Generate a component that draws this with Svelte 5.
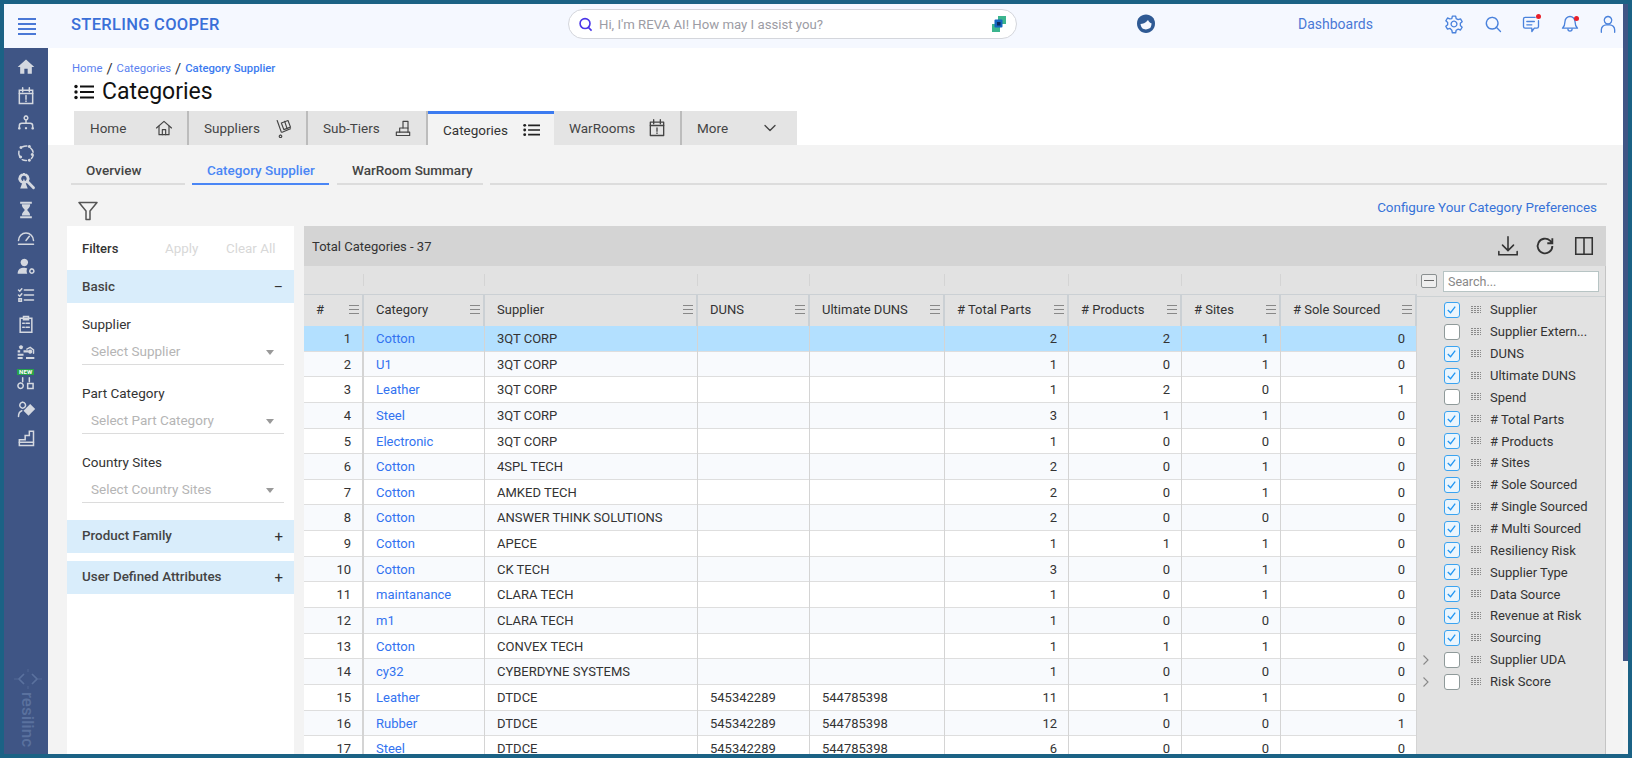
<script>
  const rows = [
    [1,'Cotton','3QT CORP','','',2,2,1,0],[2,'U1','3QT CORP','','',1,0,1,0],[3,'Leather','3QT CORP','','',1,2,0,1],
    [4,'Steel','3QT CORP','','',3,1,1,0],[5,'Electronic','3QT CORP','','',1,0,0,0],[6,'Cotton','4SPL TECH','','',2,0,1,0],
    [7,'Cotton','AMKED TECH','','',2,0,1,0],[8,'Cotton','ANSWER THINK SOLUTIONS','','',2,0,0,0],[9,'Cotton','APECE','','',1,1,1,0],
    [10,'Cotton','CK TECH','','',3,0,1,0],[11,'maintanance','CLARA TECH','','',1,0,1,0],[12,'m1','CLARA TECH','','',1,0,0,0],
    [13,'Cotton','CONVEX TECH','','',1,1,1,0],[14,'cy32','CYBERDYNE SYSTEMS','','',1,0,0,0],
    [15,'Leather','DTDCE','545342289','544785398',11,1,1,0],[16,'Rubber','DTDCE','545342289','544785398',12,0,0,1],
    [17,'Steel','DTDCE','545342289','544785398',6,0,0,0]
  ];
  const heads = ['#','Category','Supplier','DUNS','Ultimate DUNS','# Total Parts','# Products','# Sites','# Sole Sourced'];
  const cols = [
    ['Supplier',1],['Supplier Extern...',0],['DUNS',1],['Ultimate DUNS',1],['Spend',0],['# Total Parts',1],['# Products',1],['# Sites',1],
    ['# Sole Sourced',1],['# Single Sourced',1],['# Multi Sourced',1],['Resiliency Risk',1],['Supplier Type',1],['Data Source',1],
    ['Revenue at Risk',1],['Sourcing',1],['Supplier UDA',0,1],['Risk Score',0,1]
  ];
  const filters = [['Supplier','Select Supplier'],['Part Category','Select Part Category'],['Country Sites','Select Country Sites']];
  const side = [
    {f:['M12 3 2 12h3v8h5v-6h4v6h5v-8h3z']},
    {s:['M4 5h16v16H4z','M4 9h16','M8 2v5M16 2v5','M12 11.5v4.5M12 18v.5']},
    {s:['M12 7v4M4 16v-2c0-2 1-3 3-3h10c2 0 3 1 3 3v2','M12 2.500a2.200 2.200 0 1 0 .01 0'],f:['M4 15.500a1.600 1.600 0 1 0 .01 0M20 15.500a1.600 1.600 0 1 0 .01 0M12 15.500a1.400 1.400 0 1 0 .01 0']},
    {s:['M8 4.500a9 9 0 0 1 5-1M17.500 6a9 9 0 0 1 3 5M20.500 15a9 9 0 0 1-2 3.500M12.500 21a9 9 0 0 1-5-1M4.500 16.500A9 9 0 0 1 3.500 10'],f:['M6 3.500a1.800 1.800 0 1 0 .01 0M16 2.500a1.800 1.800 0 1 0 .01 0M19.500 12a1.800 1.800 0 1 0 .01 0M16 19a1.800 1.800 0 1 0 .01 0M5.500 15a1.800 1.800 0 1 0 .01 0']},
    {b:['M9.500 4a5 5 0 1 0 .01 0','M14 13l7 7'],f:['M9.500 9l4.500 12H5z']},
    {f:['M5 2h14v2.500H5zM5 19.500h14V22H5zM7 5h10c0 4-3 5.500-3.500 7 .5 1.500 3.500 3 3.500 6.500H7c0-3.500 3-5 3.500-6.500C10 10.500 7 9 7 5z']},
    {s:['M3 15a9 9 0 0 1 18 0','M12 15l4-5','M3 19.500h18']},
    {f:['M10 2a4.500 4.500 0 1 0 .01 0M2 20c0-5 3-7 8-7 1.500 0 2.500.2 3.500.7-1 1.500-1 4 0 6.300z'],s:['M19 14.500a2.500 2.500 0 1 0 .01 0']},
    {s:['M10 6h11M10 12h11M10 18h11','M3 6l1.500 1.500L7 4.500M3 12l1.500 1.500L7 10.500','M3.500 16.500h3v3h-3z']},
    {s:['M5 5h14v17H5z','M9 3h6v4H9z','M8 11h2M12 11h4M8 16h2M12 16h4']},
    {f:['M6 4a2.300 2.300 0 1 0 .01 0','M2 10h3v2.500H2zM9 10h6v2.500H9zM2 14h7v2.500H2zM12 18h10v2.500H12zM2 18h6v2.500H2z','M17 9a2.500 2.500 0 1 0 .01 0'],s:['M13 8.500l4-2 4 3v4']},
    {s:['M8 8v5M16 8v5','M5.500 14.500a3.200 3.200 0 1 0 .01 0','M14 15h6.500v6H14z']},
    {s:['M3 21c0-4 1-6 4-7','M8 4a3.500 3.500 0 1 0 .01 0'],f:['M17 6l6 6-8 8-6-6z']},
    {s:['M4 14h7v-5h5V4h5v17H4z','M4 17h17']}
  ];
</script>

{#snippet ico(paths, cls)}
  <svg class={cls} viewBox="0 0 24 24" fill="none" stroke="currentColor" stroke-width="1.7" stroke-linecap="round" stroke-linejoin="round">
    {#each paths as d}<path {d} />{/each}
  </svg>
{/snippet}

<div class="frame">
  <div class="page">
    <header class="topbar">
      <div class="burger"><i></i><i></i><i></i><i></i></div>
      <div class="brand">STERLING COOPER</div>
      <div class="reva">
        <svg class="rq" viewBox="0 0 16 16" fill="none" stroke="#4a35e8" stroke-width="1.700"><circle cx="7.500" cy="7" r="5.300"/><path d="M11 11l3.500 3.500"/></svg>
        <span>Hi, I'm REVA AI! How may I assist you?</span>
        <svg class="rl" viewBox="0 0 16 18"><rect x="7" y="1" width="8" height="8" fill="#3cb58e"/><rect x="1" y="9" width="8" height="8" fill="#3cb58e"/><rect x="3.500" y="4.500" width="8" height="8" rx="1" fill="#1565c0"/><rect x="6" y="7" width="3.500" height="3.500" fill="#0b2a5e"/></svg>
      </div>
      <svg class="swirl" viewBox="0 0 22 22"><path d="M11 1.500c5 0 9 3.800 9 9s-4 9.500-9 9.500-9-4.200-9-9.500 4-9 9-9z" fill="#2f5a94"/><path d="M5.500 11c2 0 5-1 7.500-4 .8 2 2.300 3 3.500 3.300.2 3.500-2 6.700-5 6.900-3 .2-5.500-2.700-6-6.200z" fill="#f5f8ff"/><path d="M8 16.500c2 1 4.500 1 7-.5" stroke="#2f5a94" stroke-width="1.500" fill="none"/></svg>
      <div class="dash">Dashboards</div>
      <div class="tools">
        {@render ico(['M12 8.500a3.500 3.500 0 1 0 .01 0','M10 2.500h4l.6 3 2.400 1.300 2.800-1 2 3.400-2.200 2 0 2.600 2.200 2-2 3.400-2.800-1-2.400 1.300-.6 3h-4l-.6-3L7 17.200l-2.800 1-2-3.400 2.200-2v-2.600l-2.200-2 2-3.400 2.800 1L9.400 5.500z'],'tool')}
        {@render ico(['M11 4a7 7 0 1 0 .01 0','M16 16l5 5'],'tool')}
        <span class="dot">{@render ico(['M21 8v7a2 2 0 0 1-2 2h-3l-3 4v-4H5a2 2 0 0 1-2-2V6a2 2 0 0 1 2-2h12','M7 9h9M7 13h6'],'tool')}<b></b></span>
        <span class="dot b2">{@render ico(['M12 3a6 6 0 0 0-6 6c0 5-1.500 6.500-3 8h18c-1.500-1.500-3-3-3-8a6 6 0 0 0-6-6z','M9.500 18a2.500 2.500 0 0 0 5 0'],'tool')}<b></b></span>
        {@render ico(['M12 3a4.500 4.500 0 1 0 .01 0','M4 22v-3a6 6 0 0 1 6-6h4a6 6 0 0 1 6 6v3'],'tool')}
      </div>
    </header>

    <div class="body">
      <nav class="sidebar">
        {#each side as ic, i}
          <span class="sico">
            <svg viewBox="0 0 24 24" fill="none" stroke="currentColor" stroke-width="1.800" stroke-linecap="round">
              {#each ic.f || [] as d}<path {d} fill="currentColor" stroke="none" />{/each}
              {#each ic.s || [] as d}<path {d} />{/each}
              {#each ic.b || [] as d}<path {d} stroke-width="3.400" />{/each}
            </svg>
            {#if i === 11}<em>NEW</em>{/if}
          </span>
        {/each}
        <div class="reslogo">
          <svg viewBox="0 0 28 22" fill="none" stroke="currentColor" stroke-width="1.300"><path d="M10 6l-5 5 5 5M18 6l5 5-5 5" stroke-width="1.700"/><path d="M0 11h4M24 11h4M14 1v3M14 18v3" stroke-width=".7"/></svg>
          <span>resilinc</span>
        </div>
      </nav>

      <main class="main">
        <section class="head">
          <div class="crumbs"><a>Home</a><u>/</u><a>Categories</a><u>/</u><strong>Category Supplier</strong></div>
          <h1>
            <svg viewBox="0 0 20 16"><circle cx="2" cy="2.500" r="1.700"/><circle cx="2" cy="8" r="1.700"/><circle cx="2" cy="13.500" r="1.700"/><path d="M6 1.500h14v2H6zM6 7h14v2H6zM6 12.500h14v2H6z"/></svg>
            Categories
          </h1>
          <div class="tabs">
            <div class="tab t1">Home {@render ico(['M3 12 12 4l9 8','M6 10v10h12V10','M10 20v-6h4v6'],'ti')}</div>
            <div class="tab t2">Suppliers {@render ico(['M5 3l5 14','M9 20.500a1.500 1.500 0 1 0 .01 0','M11 17l10-4','M10 6l8-3 3 8-8 3z','M14 4l3 9'],'ti')}</div>
            <div class="tab t3">Sub-Tiers {@render ico(['M4 21h16v-4H4z','M8 17v-5h10v5','M12 12V4h6v8'],'ti')}</div>
            <div class="tab t4 active">Categories
              <svg class="ti" viewBox="0 0 20 16"><circle cx="2" cy="2.500" r="1.700"/><circle cx="2" cy="8" r="1.700"/><circle cx="2" cy="13.500" r="1.700"/><path d="M6 1.500h14v2H6zM6 7h14v2H6zM6 12.500h14v2H6z"/></svg>
            </div>
            <div class="tab t5">WarRooms {@render ico(['M4 5h16v16H4z','M4 9h16','M8 2v5M16 2v5','M12 12v4M12 18v.5'],'ti')}</div>
            <div class="tab t6">More {@render ico(['M6 9l6 6 6-6'],'ti')}</div>
          </div>
        </section>

        <section class="content">
          <div class="subtabs">
            <div class="st s1">Overview</div>
            <div class="st s2 on">Category Supplier</div>
            <div class="st s3">WarRoom Summary</div>
            <div class="st s4"></div>
          </div>
          <div class="actions">
            <svg class="funnel" viewBox="0 0 20 20" fill="none" stroke="#555" stroke-width="1.500" stroke-linejoin="round"><path d="M1 1.500h18l-7 8.500v8.500H8V10z"/></svg>
            <a class="cfg">Configure Your Category Preferences</a>
          </div>
          <div class="work">
            <aside class="filters">
              <div class="fhead"><b>Filters</b><span class="ap">Apply</span><span class="cl">Clear All</span></div>
              <div class="band b1">Basic<span class="sg">–</span></div>
              <div class="fbody">
                {#each filters as f}
                  <div class="field">
                    <label>{f[0]}</label>
                    <div class="sel">{f[1]}<i></i></div>
                  </div>
                {/each}
              </div>
              <div class="band">Product Family<span class="sg p">+</span></div>
              <div class="band b3">User Defined Attributes<span class="sg p">+</span></div>
            </aside>

            <div class="gridbox">
              <div class="gtool">
                <span>Total Categories - 37</span>
                <div class="gicons">
                  <svg viewBox="0 0 24 24" fill="none" stroke="#333" stroke-width="1.700"><path d="M12 2v15M6 11l6 6 6-6M2 18v3.500h20V18" stroke-linecap="round"/></svg>
                  <svg viewBox="0 0 24 24" fill="none" stroke="#333" stroke-width="2"><path d="M20 12a8 8 0 1 1-2.500-5.800L20 9M20 3.500V9h-5.500"/></svg>
                  <svg viewBox="0 0 24 24" fill="none" stroke="#333" stroke-width="1.700"><path d="M3 3h18v18H3zM12 3v18"/></svg>
                </div>
              </div>
              <div class="gmain">
                <div class="tbl">
                  <div class="r frow">{#each heads as h}<div class="fc"></div>{/each}</div>
                  <div class="r hrow">
                    {#each heads as h}<div class="hc"><span>{h}</span><i></i></div>{/each}
                  </div>
                  {#each rows as r, i}
                    <div class="r row" class:sel1={i === 0} class:alt={i % 2 === 1}>
                      <div class="c n">{r[0]}</div>
                      <div class="c"><a>{r[1]}</a></div>
                      <div class="c">{r[2]}</div>
                      <div class="c">{r[3]}</div>
                      <div class="c">{r[4]}</div>
                      <div class="c n">{r[5]}</div>
                      <div class="c n">{r[6]}</div>
                      <div class="c n">{r[7]}</div>
                      <div class="c n">{r[8]}</div>
                    </div>
                  {/each}
                </div>
                <div class="colpanel">
                  <div class="csearch">
                    <span class="minus"></span>
                    <div class="sinput">Search...</div>
                  </div>
                  <div class="clist">
                    {#each cols as c}
                      <div class="citem">
                        <span class="chev">{#if c[2]}<svg viewBox="0 0 8 12" fill="none" stroke="#888" stroke-width="1.100"><path d="M1.500 1.500 6 6l-4.500 4.500"/></svg>{/if}</span>
                        <span class="cb" class:ck={c[1]}>{#if c[1]}<svg viewBox="0 0 14 14" fill="none" stroke="#2196f3" stroke-width="1.400"><path d="M3 7.500 6 10.500 11 4"/></svg>{/if}</span>
                        <span class="grip"></span>
                        <span class="cl2">{c[0]}</span>
                      </div>
                    {/each}
                  </div>
                </div>
              </div>
            </div>
          </div>
        </section>
      </main>
    </div>
  </div>
  <div class="scroll"><div class="thumb"></div></div>
</div>

<style>
  :global(body) { margin: 0; font-family: Roboto, "Liberation Sans", sans-serif; }
  .frame { width: 1632px; height: 758px; box-sizing: border-box; border: 4px solid #1b6285; display: flex; overflow: hidden; background: #fff; color: #333; }
  .page { flex: 1; min-width: 0; display: flex; flex-direction: column; }
  .scroll { width: 5px; background: #f5f5f5; }
  .thumb { height: 657px; background: #3f5585; }

  .topbar { height: 44px; flex: none; background: #f5f8ff; display: flex; align-items: center; position: relative; padding-bottom: 4px; box-sizing: border-box; }
  .burger { margin-left: 14px; margin-top: 4px; width: 18px; display: flex; flex-direction: column; gap: 3px; }
  .burger i { height: 2px; background: #4a78d6; }
  .brand { margin-left: 35px; margin-top: 1px; width: 497px; font-size: 16.500px; font-weight: 500; color: #3a6fd8; letter-spacing: .3px; }
  .reva { width: 449px; height: 30px; box-sizing: border-box; border: 1px solid #d4d6dc; border-radius: 16px; background: #fff; display: flex; align-items: center; padding: 0 9px 0 9px; font-size: 13.200px; color: #9c9ca4; }
  .reva span { flex: 1; margin-left: 6px; }
  .rq { width: 15px; height: 15px; }
  .rl { width: 16px; height: 18px; }
  .swirl { width: 22px; height: 22px; margin-left: 118px; }
  .dash { margin-left: 141px; width: 76px; font-size: 14px; color: #4a78d6; }
  .tools { margin-left: 70px; display: flex; align-items: center; gap: 18.500px; color: #4a82dc; }
  .tool { width: 20px; height: 20px; display: block; stroke-width: 1.600; }
  .dot { position: relative; display: block; }
  .dot b { position: absolute; width: 5px; height: 5px; border-radius: 50%; background: #e8202a; right: 0; top: 0; }
  .dot.b2 b { right: 1px; top: 2px; }

  .body { flex: 1; min-height: 0; display: flex; }
  .sidebar { width: 44px; flex: none; background: #3f5585; display: flex; flex-direction: column; align-items: center; gap: 8.500px; padding-top: 9px; box-sizing: border-box; color: #d4d8e0; position: relative; }
  .sico { position: relative; width: 20px; height: 20px; display: block; }
  .sico svg { width: 20px; height: 20px; display: block; }
  .sico em { position: absolute; left: 1px; top: -2px; background: #27a24a; color: #fff; font: 700 6px/6.500px Roboto, sans-serif; padding: 0 2px; letter-spacing: .2px; }
  .reslogo { position: absolute; left: 10px; top: 620px; display: flex; flex-direction: column; align-items: center; color: #5a719e; }
  .reslogo svg { width: 28px; height: 22px; }
  .reslogo span { writing-mode: vertical-rl; font-size: 17px; font-weight: 500; line-height: 18px; margin-top: 2px; }

  .main { flex: 1; min-width: 0; display: flex; flex-direction: column; }
  .head { height: 97px; flex: none; background: #fff; padding-left: 24px; box-sizing: border-box; position: relative; }
  .crumbs { padding-top: 13px; height: 16px; line-height: 16px; font-size: 11.300px; display: flex; gap: 4px; align-items: center; box-sizing: content-box; }
  .crumbs a { color: #5a7ff0; }
  .crumbs u { text-decoration: none; color: #333; font-size: 15px; }
  .crumbs strong { color: #3c7bf0; font-weight: 500; }
  h1 { margin: 0; height: 29px; line-height: 29px; font-size: 23px; font-weight: 400; color: #111; display: flex; align-items: center; padding-left: 2px; gap: 8px; }
  h1 svg { width: 20px; height: 16px; fill: #111; }
  .tabs { position: absolute; left: 26px; bottom: 0; display: flex; height: 34px; }
  .tab { background: #e4e4e4; height: 34px; box-sizing: border-box; display: flex; align-items: center; justify-content: space-between; padding: 0 13px 0 15px; font-size: 13.500px; color: #444; border-right: 2px solid #bcbcbc; }
  .tab.t1 { padding-left: 16px; }
  .tab.active { background: #f3f3f3; border-top: 3px solid #3c7bf0; border-right: 0; color: #333; padding: 0 14px 0 15px; }
  .tab.t6 { border-right: 0; }
  .t1 { width: 115px; } .t2 { width: 119px; } .t3 { width: 120px; } .t4 { width: 126px; } .t5 { width: 128px; } .t6 { width: 115px; padding-right: 17px; }
  .ti { width: 20px; height: 20px; stroke-width: 1.400; color: #444; fill: none; }
  .t4 svg { width: 17px; height: 14px; fill: #222; }
  .t5 .ti, .t6 .ti { stroke-width: 1.600; }

  .content { flex: 1; min-height: 0; background: #f3f3f3; display: flex; flex-direction: column; padding-left: 19px; padding-right: 17px; overflow: hidden; }
  .subtabs { height: 40px; flex: none; display: flex; padding-left: 4px; }
  .st { height: 40px; box-sizing: border-box; border-bottom: 2px solid #dcdcdc; display: flex; align-items: center; padding: 11px 0 0 15px; font-size: 13.500px; font-weight: 500; color: #444; margin-right: 8px; }
  .s1 { width: 114px; margin-right: 7px; } .s2 { width: 137px; } .s3 { width: 146px; margin-right: 7px; } .s4 { flex: 1; margin-right: -1px; }
  .st.on { color: #4a86f5; border-bottom-color: #4a86f5; }
  .actions { height: 41px; flex: none; display: flex; align-items: center; justify-content: space-between; padding-left: 11px; padding-right: 9px; }
  .funnel { width: 20px; height: 20px; margin-top: 11px; }
  .cfg { color: #3672d8; font-size: 13.400px; margin-top: 3px; }
  .work { flex: 1; min-height: 0; display: flex; gap: 10px; }

  .filters { width: 227px; flex: none; background: #fff; }
  .fhead { height: 44px; display: flex; align-items: center; padding-left: 15px; font-size: 13px; }
  .fhead b { font-weight: 500; color: #333; width: 83px; }
  .ap { color: #d8d8d8; width: 61px; font-size: 13.400px; }
  .cl { color: #d8d8d8; font-size: 13.400px; }
  .band { height: 33px; background: #d9edfb; display: flex; align-items: center; justify-content: space-between; padding: 0 11px 2px 15px; box-sizing: border-box; font-size: 13.400px; font-weight: 500; color: #444; }
  .band.b1 { padding-bottom: 0; }
  .band.b3 { margin-top: 8px; }
  .sg { font-size: 14px; color: #333; font-weight: 400; }
  .sg.p { font-size: 15px; margin-top: 2px; }
  .fbody { padding: 0 10px 15px 15px; height: 217px; box-sizing: border-box; }
  .field { height: 69px; padding-top: 10.600px; box-sizing: border-box; }
  .field label { display: block; font-size: 13.500px; color: #333; line-height: 20px; }
  .sel { position: relative; height: 31px; line-height: 30px; padding: 2px 0 0 9px; box-sizing: border-box; border-bottom: 1px solid #dcdcdc; font-size: 13.500px; color: #b5b5b5; }
  .sel i { position: absolute; right: 10px; top: 16px; border: 4px solid transparent; border-top: 5px solid #999; border-bottom: 0; }

  .gridbox { flex: 1; min-width: 0; display: flex; flex-direction: column; }
  .gtool { height: 40px; flex: none; background: #d4d4d4; display: flex; align-items: center; justify-content: space-between; padding: 0 11px 0 8px; font-size: 13px; color: #333; }
  .gicons { display: flex; gap: 15px; }
  .gicons svg { width: 22px; height: 22px; display: block; }
  .gicons svg:last-child { margin-left: 2px; }
  .gmain { flex: 1; min-height: 0; display: flex; }
  .tbl { width: 1113px; flex: none; background: #fff; overflow: hidden; }
  .r { display: grid; grid-template-columns: 60px 121px 213px 112px 135px 124px 113px 99px 136px; }
  .frow { height: 29px; background: #e2e2e2; border-bottom: 1px solid #cbd0d4; box-sizing: border-box; }
  .fc { margin: 8px 0; border-right: 1px solid #d4d4d4; }
  .hrow { height: 31px; background: #e2e2e2; box-sizing: border-box; }
  .hc { display: flex; align-items: center; justify-content: space-between; padding: 0 3px 2px 12px; font-size: 13px; color: #333; border-right: 2px solid #cbd0d4; }
  .hc i { width: 10px; height: 7px; border-top: 1px solid #888; border-bottom: 1px solid #888; position: relative; }
  .hc i::after { content: ""; position: absolute; left: 0; right: 0; top: 3px; height: 1px; background: #888; }
  .row { height: 25.650px; box-sizing: border-box; background: #fff; border-bottom: 1px solid #dedede; }
  .row.alt { background: #f8fafd; }
  .row.sel1 { background: #b3e0ff; }
  .c { font-size: 13px; line-height: 26px; padding: 0 11px 0 12px; color: #333; border-right: 1px solid #d4d4d4; white-space: nowrap; }
  .row .c:first-child { border-right-width: 2px; }
  .c.n { text-align: right; }
  .c a { color: #3273f0; }

  .colpanel { flex: 1; background: #e2e2e2; border-right: 1px solid #c4c4c4; box-sizing: border-box; }
  .csearch { height: 31px; display: flex; align-items: center; padding-left: 4px; padding-right: 6px; gap: 6px; border-bottom: 1px solid #cdd2d4; box-sizing: border-box; }
  .minus { width: 16px; height: 14px; box-sizing: border-box; border: 1px solid #8a8f90; border-radius: 2px; background: #eee; position: relative; }
  .minus::after { content: ""; position: absolute; left: 2px; right: 2px; top: 5px; height: 1px; background: #666; }
  .sinput { flex: 1; height: 21px; box-sizing: border-box; background: #fff; border: 1px solid #b7c4c4; font-size: 12.500px; color: #888; line-height: 19px; padding-left: 4px; }
  .clist { padding-top: 2px; }
  .citem { height: 21.870px; display: flex; align-items: center; font-size: 13px; color: #333; padding-left: 5px; }
  .chev { width: 22px; height: 12px; display: block; }
  .chev svg { width: 8px; height: 12px; display: block; }
  .cb { width: 16px; height: 16px; box-sizing: border-box; border: 1px solid #8f9a9a; border-radius: 3px; background: #fff; display: block; }
  .cb.ck { border: 1.500px solid #3aa3f0; background: #eaf5fd; }
  .cb svg { width: 13px; height: 13px; display: block; }
  .grip { width: 11px; height: 8px; margin-left: 10px; margin-right: 9px; background: conic-gradient(#8a8a8a 25%, transparent 0) 0 0 / 3px 2px; }
  .cl2 { white-space: nowrap; }
</style>
